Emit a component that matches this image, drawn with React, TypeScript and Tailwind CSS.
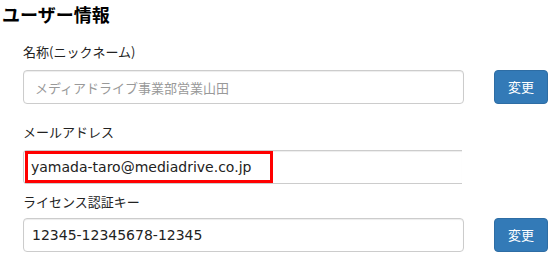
export default function App() {
  const jp = { fontFamily: '"Noto Sans CJK JP", "Noto Sans", sans-serif' };

  return (
    <div
      className="w-[558px] h-[256px] overflow-hidden bg-white text-[#333]"
      style={jp}
    >
      {/* Heading */}
      <h2 className="pl-[2px] text-[18px] font-bold leading-[28px] text-black">ユーザー情報</h2>

      <div className="pl-[23px]">
        {/* Nickname */}
        <label className="mt-[14px] block text-[13px] leading-[20px] text-[#222]">名称(ニックネーム)</label>
        <div className="mt-[8px] flex items-center gap-[30px]">
          <input
            readOnly
            placeholder="メディアドライブ事業部営業山田"
            className="h-[34px] w-[441px] rounded-[4px] border border-[#ccc] bg-white pl-[11px] text-[13px] text-[#555] shadow-[inset_0_1px_1px_rgba(0,0,0,0.075)] outline-none placeholder:text-[#999]"
          />
          <button className="h-[34px] w-[54px] rounded-[4px] border border-[#2e6da4] bg-[#337ab7] text-[13px] text-white">
            変更
          </button>
        </div>

        {/* Email */}
        <label className="mt-[18px] block text-[13px] leading-[20px] text-[#222]">メールアドレス</label>
        <div className="mt-[8px] flex h-[34px] w-[439px] items-center rounded-l-[4px] border-y border-l border-[#ccc] bg-white pl-[1px] shadow-[inset_0_1px_1px_rgba(0,0,0,0.075)]">
          <div
            className="flex h-[32px] w-[248px] items-center border-[3px] border-[#ff0000] pl-[3px] text-[14px] text-[#222]"
            style={{ fontFamily: '"DejaVu Sans", "Noto Sans CJK JP", sans-serif' }}
          >
            yamada-taro@mediadrive.co.jp
          </div>
        </div>

        {/* License key */}
        <label className="mt-[8px] block text-[13px] leading-[20px] text-[#222]">ライセンス認証キー</label>
        <div className="mt-[6px] flex items-center gap-[30px]">
          <div
            className="flex h-[34px] w-[441px] items-center rounded-[4px] border border-[#ccc] bg-white pl-[8px] text-[14px] text-[#222] shadow-[inset_0_1px_1px_rgba(0,0,0,0.075)]"
            style={{ fontFamily: '"DejaVu Sans", "Noto Sans CJK JP", sans-serif' }}
          >
            12345-12345678-12345
          </div>
          <button className="h-[34px] w-[54px] rounded-[4px] border border-[#2e6da4] bg-[#337ab7] text-[13px] text-white">
            変更
          </button>
        </div>
      </div>
    </div>
  );
}
